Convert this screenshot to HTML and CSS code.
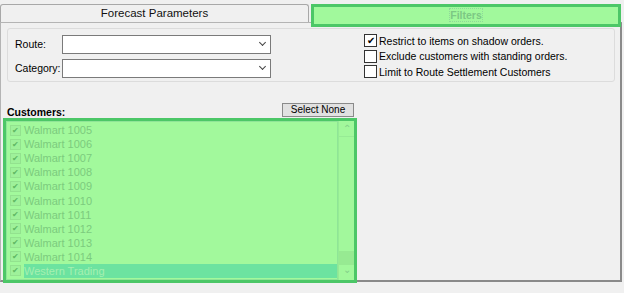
FILE: index.html
```html
<!DOCTYPE html>
<html lang="en">
<head>
    <title>Forecast</title>
    <link rel="stylesheet" href="styles.css">
</head>
<body>
    <div class="tabs">
        <div class="tab">Forecast Parameters</div>
        <div class="tab tabActiv"><span class="tabText">Filters</span></div>
    </div>
    <div class="panou">
        <div class="grup">
            <div class="campuri">
                <div class="rand"><label>Route:</label><div class="combo"><span class="sageata"></span></div></div>
                <div class="rand"><label>Category:</label><div class="combo"><span class="sageata"></span></div></div>
            </div>
            <div class="optiuni">
                <div class="optiune"><span class="bifa bifat">&#10004;</span>Restrict to items on shadow orders.</div>
                <div class="optiune"><span class="bifa"></span>Exclude customers with standing orders.</div>
                <div class="optiune"><span class="bifa"></span>Limit to Route Settlement Customers</div>
            </div>
        </div>
        <div class="antetClienti">
            <span class="etichetaClienti">Customers:</span>
            <button class="butonNimic">Select None</button>
        </div>
        <div class="lista">
            <div class="elemente">
                <div class="element"><span class="mic">&#10004;</span>Walmart 1005</div>
                <div class="element"><span class="mic">&#10004;</span>Walmart 1006</div>
                <div class="element"><span class="mic">&#10004;</span>Walmart 1007</div>
                <div class="element"><span class="mic">&#10004;</span>Walmart 1008</div>
                <div class="element"><span class="mic">&#10004;</span>Walmart 1009</div>
                <div class="element"><span class="mic">&#10004;</span>Walmart 1010</div>
                <div class="element"><span class="mic">&#10004;</span>Walmart 1011</div>
                <div class="element"><span class="mic">&#10004;</span>Walmart 1012</div>
                <div class="element"><span class="mic">&#10004;</span>Walmart 1013</div>
                <div class="element"><span class="mic">&#10004;</span>Walmart 1014</div>
                <div class="element"><span class="mic">&#10004;</span><span class="selectat">Western Trading</span></div>
            </div>
            <div class="scroll">
                <div class="scrollBtn">&#8963;</div>
                <div class="scrollPista"></div>
                <div class="scrollDeget"></div>
                <div class="scrollBtn jos">&#8964;</div>
            </div>
        </div>
    </div>
</body>
</html>
```

FILE: styles.css
```css
body {
    margin: 0;
    background-color: #f0f0f0;
    font-family: "Liberation Sans", Arial, sans-serif;
    font-size: 10.5px;
    color: #000;
    width: 624px;
    height: 293px;
    overflow: hidden;
}

.tabs {
    display: flex;
    padding-top: 4px;
    height: 18px;
    position: relative;
    z-index: 2;
}

.tab {
    width: 307px;
    height: 17px;
    border: 1px solid #a8a8a8;
    border-bottom: none;
    border-radius: 3px 3px 0 0;
    background-color: #f0f0f0;
    text-align: center;
    font-size: 11.5px;
    line-height: 17px;
    color: #111;
}

.tabActiv {
    width: 304px;
    height: 17px;
    margin-left: 2px;
    border: 3px solid #4cc767;
    border-radius: 0;
    background-color: #a1f99c;
    line-height: 16px;
}

.tabText {
    color: #7cc884;
    font-weight: bold;
    font-size: 10.5px;
    outline: 1px dotted #8fd89a;
}

.panou {
    width: 619px;
    height: 257px;
    border: 1px solid #b4b4b4;
    border-right: 2px solid #8a8a8a;
    border-bottom: 2px solid #8a8a8a;
    background-color: #f0f0f0;
}

.grup {
    display: flex;
    margin: 5px 0 0 6px;
    width: 606px;
    height: 52px;
    border: 1px solid #dcdcdc;
    border-radius: 3px;
}

.campuri {
    width: 349px;
    padding: 5px 0 0 7px;
}

.rand {
    display: flex;
    align-items: center;
    height: 20px;
    margin-bottom: 4px;
}

.rand label {
    width: 47px;
}

.combo {
    position: relative;
    width: 207px;
    height: 17px;
    border: 1px solid #7a7a7a;
    background-color: #fff;
}

.sageata {
    position: absolute;
    right: 5px;
    top: 4px;
    width: 4px;
    height: 4px;
    border-right: 1.5px solid #444;
    border-bottom: 1.5px solid #444;
    transform: rotate(45deg);
}

.optiuni {
    padding-top: 4px;
}

.optiune {
    display: flex;
    align-items: center;
    height: 15.5px;
}

.bifa {
    width: 11px;
    height: 11px;
    border: 1px solid #333;
    background-color: #fff;
    margin-right: 2px;
    font-size: 10px;
    line-height: 11px;
    text-align: center;
}

.antetClienti {
    display: flex;
    justify-content: space-between;
    align-items: flex-end;
    width: 347px;
    margin: 21px 0 0 6px;
}

.etichetaClienti {
    font-weight: bold;
    line-height: 12px;
}

.butonNimic {
    width: 72px;
    height: 14px;
    padding: 0;
    border: 1px solid #8a8a8a;
    background-color: #e1e1e1;
    font-family: "Liberation Sans", Arial, sans-serif;
    font-size: 10px;
    line-height: 12px;
    margin-bottom: 1px;
}

.lista {
    display: flex;
    width: 348px;
    height: 159px;
    margin: 0 0 0 2px;
    border: 3px solid #4cc767;
    background-color: #a2f99c;
}

.elemente {
    flex: 1;
    padding: 1px 0 0 3px;
    border: 1px solid #8fe597;
}

.element {
    display: flex;
    align-items: center;
    height: 14.1px;
    color: #7ccb7e;
    font-size: 11px;
}

.mic {
    width: 9px;
    height: 9px;
    margin-right: 3px;
    border: 1px solid #93e28f;
    background-color: #9ef19a;
    color: #5fb864;
    font-size: 8px;
    line-height: 9px;
    text-align: center;
}

.selectat {
    flex: 1;
    background-color: #6ce3a0;
    color: #a6f0b0;
    line-height: 14px;
}

.scroll {
    display: flex;
    flex-direction: column;
    width: 15px;
    border-left: 1px solid #95ec94;
    background-color: #a2f89c;
}

.scrollBtn {
    height: 15px;
    color: #83d08a;
    font-size: 10px;
    text-align: center;
    line-height: 16px;
    border-bottom: 1px solid #97eb95;
}

.jos {
    border-bottom: none;
    line-height: 10px;
}

.scrollPista {
    flex: 1;
}

.scrollDeget {
    height: 14px;
    background-color: #97ea92;
}
```
